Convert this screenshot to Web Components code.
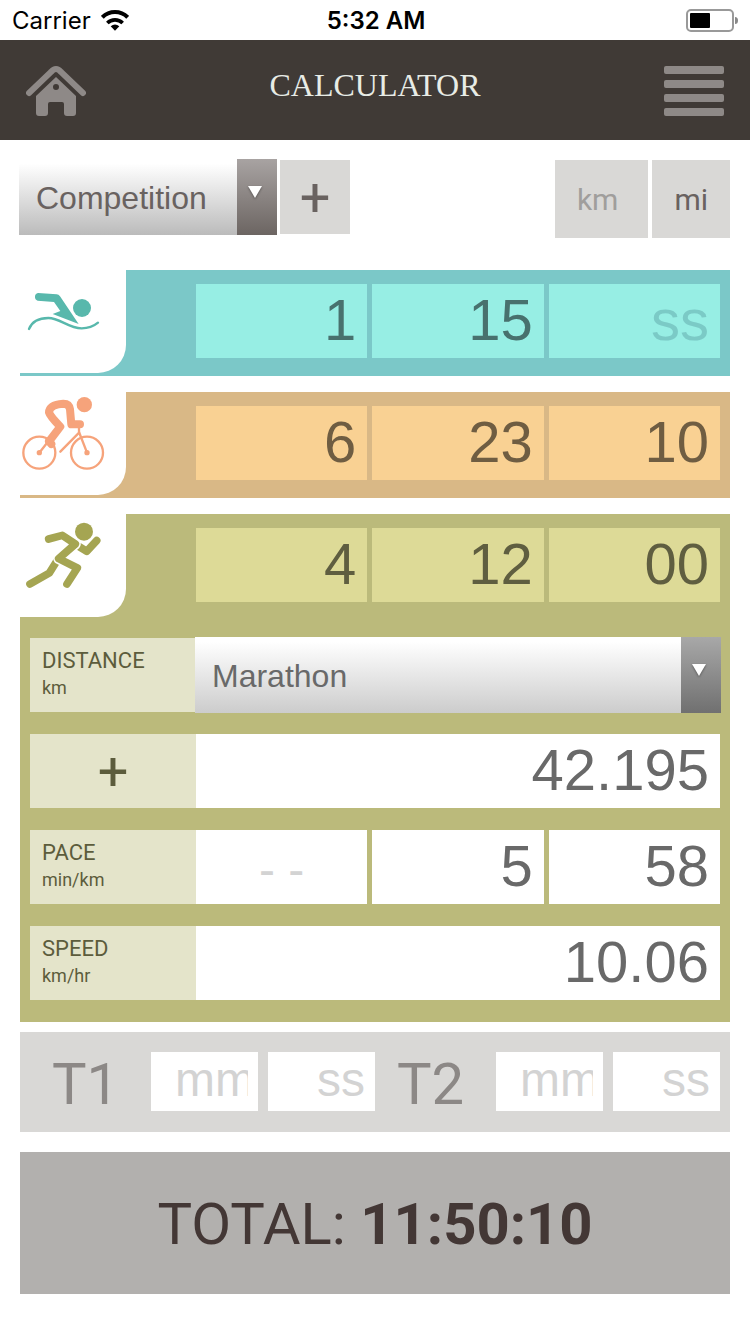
<!DOCTYPE html>
<html lang="en">
<head>
<meta charset="utf-8">
<meta name="viewport" content="width=device-width, initial-scale=1">
<title>Calculator</title>
<style>
    body {
        margin: 0;
        background: #fff;
        font-family: Roboto, sans-serif;
    }
</style>
</head>
<body>
<calc-app></calc-app>

<script>
// Box and input styles shared by every element that holds number fields
const fieldStyles = `
    *, *::before, *::after {
        box-sizing: border-box;
    }

    input {
        display: block;
        width: 100%;
        min-width: 0;
        height: 74px;
        margin: 0;
        padding: 0 11px 4px;
        border: 0;
        border-radius: 0;
        outline-offset: -2px;
        background: var(--field-bg, #fff);
        color: var(--field-fg, #696969);
        font: 58px "Liberation Sans", Arial, sans-serif;
        text-align: right;
    }

    input::placeholder {
        color: var(--field-hint, #d3d3d3);
        opacity: 1;
    }
`;

const icons = {
    swim: `
        <svg viewBox="60 30 318 309" fill="#58b8ac" aria-hidden="true">
            <path d="M114 99L170 103Q176 103 180 109L236 192L158 162L181 153L162 126L113 122A12 12 0 0 1 114 99Z"/>
            <circle cx="246" cy="144" r="27"/>
            <path d="M87 207C97 182 122 174 145 174C180 174 205 205 245 205C265 205 282 198 294 188" fill="none" stroke="#58b8ac" stroke-width="7" stroke-linecap="round"/>
        </svg>`,
    bike: `
        <svg viewBox="60 36 318 309" fill="none" stroke="#f6a37b" stroke-linecap="round" stroke-linejoin="round" aria-hidden="true">
            <g stroke-width="7">
                <circle cx="118" cy="218" r="48"/>
                <circle cx="261" cy="218" r="48"/>
                <path d="M145 184L118 218M181 215L238 157M237 140V156L261 218"/>
            </g>
            <path d="M240 133H214L210 88Q208 71 190 71Q148 74 147 97Q150 108 181 140L148 183" stroke-width="24"/>
            <path d="M147 184L154 192" stroke-width="24"/>
            <g fill="#f6a37b" stroke="none">
                <circle cx="118" cy="218" r="8"/>
                <circle cx="261" cy="218" r="8"/>
                <circle cx="253" cy="74" r="23"/>
            </g>
        </svg>`,
    run: `
        <svg viewBox="60 42 318 309" fill="none" stroke="#a5a552" stroke-width="23" stroke-linecap="round" stroke-linejoin="round" aria-hidden="true">
            <path d="M90 252L148 219L170 184"/>
            <path d="M290 122L260 154L238 140"/>
            <path d="M146 117L187 106L226 132L176 176L232 204L201 252" stroke="#fff" stroke-width="33"/>
            <path d="M146 117L187 106L226 132L176 176L232 204L201 252"/>
            <circle cx="252" cy="95" r="27" fill="#a5a552" stroke="none"/>
        </svg>`
};

class StatusBar extends HTMLElement {
    constructor() {
        super();
        this.attachShadow({ mode: 'open' });
    }

    connectedCallback() {
        this.shadowRoot.innerHTML = `
            <style>
                :host {
                    display: grid;
                    grid-template-columns: 1fr auto 1fr;
                    align-items: center;
                    height: 40px;
                    padding: 0 10px 0 12px;
                    color: #000;
                    font: 24px Inter, sans-serif;
                }

                .network {
                    display: flex;
                    align-items: center;
                    gap: 10px;
                }

                .time {
                    font-weight: 600;
                }

                .battery {
                    justify-self: end;
                }

                svg {
                    display: block;
                }
            </style>
            <span class="network">
                Carrier
                <svg width="28" height="21" viewBox="303 29 84 63" fill="none" stroke="#000" stroke-width="12" aria-hidden="true">
                    <path d="M307 51A54 54 0 0 1 383 51"/>
                    <path d="M322 68A33 33 0 0 1 368 68" stroke-width="11"/>
                    <path d="M345 91L332 78Q345 67 358 78Z" fill="#000" stroke="none"/>
                </svg>
            </span>
            <span class="time">5:32 AM</span>
            <svg class="battery" width="54" height="24" viewBox="0 0 54 24" aria-hidden="true">
                <rect x="1" y="2" width="46" height="21" rx="4" fill="none" stroke="#999" stroke-width="2"/>
                <rect x="4" y="5" width="20" height="15" rx="1"/>
                <path d="M49 9Q52 9 52 12.500Q52 16 49 16Z" fill="#888"/>
            </svg>
        `;
    }
}

class AppHeader extends HTMLElement {
    constructor() {
        super();
        this.attachShadow({ mode: 'open' });
    }

    connectedCallback() {
        this.shadowRoot.innerHTML = `
            <style>
                :host {
                    display: flex;
                    justify-content: space-between;
                    align-items: center;
                    height: 100px;
                    padding: 0 26px;
                    background: #403a36;
                }

                h1 {
                    margin: 0;
                    padding-bottom: 10px;
                    color: #e8ece6;
                    font: 32px "Liberation Serif", "Times New Roman", serif;
                }

                a, button {
                    display: block;
                    padding: 2px 0 0;
                    border: 0;
                    background: none;
                }

                svg {
                    display: block;
                    fill: #8e8987;
                }
            </style>
            <a href="#home" aria-label="Home">
                <svg width="60" height="50" viewBox="0 0 60 50" aria-hidden="true">
                    <path d="M3 27L25 6Q30 0 35 6L57 27" fill="none" stroke="#8e8987" stroke-width="6" stroke-linecap="round"/>
                    <path fill-rule="evenodd" d="M30 11L50 30V47Q50 50 47 50H41Q38 50 38 47V38Q38 36 36 36H24Q22 36 22 38V47Q22 50 19 50H13Q10 50 10 47V30ZM30 18A3 3 0 1 0 30 24A3 3 0 1 0 30 18Z"/>
                </svg>
            </a>
            <h1><slot></slot></h1>
            <button type="button" aria-label="Menu">
                <svg width="60" height="50" viewBox="0 0 60 50" aria-hidden="true">
                    <rect width="60" height="8" rx="2"/>
                    <rect y="14" width="60" height="8" rx="2"/>
                    <rect y="28" width="60" height="8" rx="2"/>
                    <rect y="42" width="60" height="8" rx="2"/>
                </svg>
            </button>
        `;
    }
}

class PickList extends HTMLElement {
    constructor() {
        super();
        this.attachShadow({ mode: 'open' });
    }

    connectedCallback() {
        const options = this.getAttribute('options').split(',');

        this.shadowRoot.innerHTML = `
            <style>
                :host {
                    display: block;
                    position: relative;
                    margin: -1px;
                }

                :host::after {
                    content: "";
                    position: absolute;
                    top: 27px;
                    right: 15px;
                    border: 7px solid transparent;
                    border-top: 12px solid #fff;
                    border-bottom: 0;
                    filter: drop-shadow(0 1px 1px rgba(0, 0, 0, 0.4));
                    pointer-events: none;
                }

                select {
                    appearance: none;
                    display: block;
                    width: 100%;
                    height: 76px;
                    margin: 0;
                    padding: 2px 56px 0 17px;
                    border: 0;
                    border-radius: 0;
                    background:
                        linear-gradient(var(--knob-top, #a8a8a8), var(--knob-bottom, #707070)) right / 40px 100% no-repeat,
                        linear-gradient(#fff 6%, var(--face-bottom, #ccc));
                    color: var(--pick-fg, #696969);
                    font: 32px "Liberation Sans", Arial, sans-serif;
                }
            </style>
            <select aria-label="${this.getAttribute('label')}">
                ${options.map(o => `<option>${o}</option>`).join('')}
            </select>
        `;
    }
}

class CalcToolbar extends HTMLElement {
    constructor() {
        super();
        this.attachShadow({ mode: 'open' });
    }

    connectedCallback() {
        this.shadowRoot.innerHTML = `
            <style>
                :host {
                    display: flex;
                    justify-content: space-between;
                    align-items: flex-start;
                }

                div {
                    display: flex;
                    gap: 4px;
                }

                pick-list {
                    width: 258px;
                    --face-bottom: #bbb;
                    --knob-top: #a8a3a2;
                    --knob-bottom: #6c6562;
                    --pick-fg: #696260;
                }

                button {
                    height: 78px;
                    padding: 0 22px;
                    border: 0;
                    background: #d9d8d6;
                    color: #696260;
                    font: 30px Roboto, sans-serif;
                }

                .add {
                    width: 70px;
                    height: 74px;
                    padding: 0;
                    font-size: 54px;
                }

                .km {
                    padding-right: 30px;
                    color: #a09e9c;
                }
            </style>
            <div>
                <pick-list label="Competition" options="Competition,Ironman,Half Ironman,Olympic,Sprint"></pick-list>
                <button type="button" class="add" aria-label="Add competition">+</button>
            </div>
            <div>
                <button type="button" class="km" aria-pressed="true">km</button>
                <button type="button" aria-pressed="false">mi</button>
            </div>
        `;
    }
}

class SportLeg extends HTMLElement {
    constructor() {
        super();
        this.attachShadow({ mode: 'open' });
    }

    connectedCallback() {
        const sport = this.getAttribute('sport');
        const [hh, mm, ss] = this.getAttribute('time').split(':');

        this.shadowRoot.innerHTML = `
            <style>
                ${fieldStyles}

                :host {
                    display: block;
                    background: var(--leg-bg);
                }

                .head {
                    display: flex;
                    align-items: flex-start;
                    gap: 70px;
                    height: 106px;
                    padding-right: 10px;
                }

                .tab {
                    flex: none;
                    width: 106px;
                    height: 103px;
                    border-radius: 0 0 28px 0;
                    background: #fff;
                }

                .tab svg {
                    display: block;
                    width: 100%;
                }

                .time {
                    flex: 1;
                    display: grid;
                    grid-template-columns: repeat(3, 1fr);
                    gap: 5px;
                    padding-top: 14px;
                }
            </style>
            <div class="head">
                <div class="tab">${icons[sport]}</div>
                <div class="time">
                    <input inputmode="numeric" placeholder="hh" value="${hh}" aria-label="${sport} hours">
                    <input inputmode="numeric" placeholder="mm" value="${mm}" aria-label="${sport} minutes">
                    <input inputmode="numeric" placeholder="ss" value="${ss}" aria-label="${sport} seconds">
                </div>
            </div>
            <slot></slot>
        `;
    }
}

class LegDetails extends HTMLElement {
    constructor() {
        super();
        this.attachShadow({ mode: 'open' });
    }

    connectedCallback() {
        this.shadowRoot.innerHTML = `
            <style>
                ${fieldStyles}

                :host {
                    display: grid;
                    gap: 22px;
                    padding: 18px 10px 22px;
                }

                .row {
                    display: grid;
                    grid-template-columns: 166px 1fr;
                    height: 74px;
                }

                label, .name, .add {
                    display: block;
                    padding: 9px 12px;
                    border: 0;
                    background: #e4e4ca;
                    color: #5c5c3c;
                    font: 22px/28px Roboto, sans-serif;
                }

                small {
                    display: block;
                    font-size: 18px;
                    line-height: 26px;
                }

                .add {
                    padding: 2px 0 0;
                    font-size: 54px;
                }

                .pace {
                    display: grid;
                    grid-template-columns: repeat(3, 1fr);
                    gap: 5px;
                }

                .empty::placeholder {
                    font-size: 48px;
                    text-align: center;
                }
            </style>
            <div class="row">
                <div class="name">DISTANCE<small>km</small></div>
                <pick-list label="Distance" options="Marathon,Half marathon,10 km,5 km"></pick-list>
            </div>
            <div class="row">
                <button type="button" class="add" aria-label="Add distance">+</button>
                <input inputmode="decimal" value="42.195" aria-label="Distance, km">
            </div>
            <div class="row">
                <label for="pace-min">PACE<small>min/km</small></label>
                <div class="pace">
                    <input class="empty" placeholder="- -" aria-label="Pace hours" readonly>
                    <input id="pace-min" inputmode="numeric" value="5">
                    <input inputmode="numeric" value="58" aria-label="Pace seconds">
                </div>
            </div>
            <div class="row">
                <label for="speed">SPEED<small>km/hr</small></label>
                <input id="speed" inputmode="decimal" value="10.06">
            </div>
        `;
    }
}

class TransitionBar extends HTMLElement {
    constructor() {
        super();
        this.attachShadow({ mode: 'open' });
    }

    group(name) {
        return `
            <div class="group">
                <label for="${name}-mm">${name}</label>
                <input id="${name}-mm" inputmode="numeric" placeholder="mm">
                <input inputmode="numeric" placeholder="ss" aria-label="${name} seconds">
            </div>
        `;
    }

    connectedCallback() {
        this.shadowRoot.innerHTML = `
            <style>
                ${fieldStyles}

                :host {
                    display: grid;
                    grid-template-columns: 1fr 1fr;
                    padding: 20px 10px;
                    background: #d9d8d6;
                }

                .group {
                    display: grid;
                    grid-template-columns: 111px 1fr 1fr;
                    gap: 10px;
                    height: 60px;
                }

                label {
                    color: #8c8886;
                    font-size: 58px;
                    line-height: 64px;
                    text-align: center;
                }

                input {
                    height: 59px;
                    padding: 0 10px 4px 24px;
                    font-size: 48px;
                }
            </style>
            ${this.group('T1')}
            ${this.group('T2')}
        `;
    }
}

class TotalBar extends HTMLElement {
    constructor() {
        super();
        this.attachShadow({ mode: 'open' });
    }

    connectedCallback() {
        this.shadowRoot.innerHTML = `
            <style>
                :host {
                    display: block;
                    padding-top: 2px;
                    background: #b2b0ae;
                    color: #433735;
                    font-size: 58px;
                    line-height: 140px;
                    text-align: center;
                }
            </style>
            TOTAL: <strong><slot></slot></strong>
        `;
    }
}

class CalcApp extends HTMLElement {
    constructor() {
        super();
        this.attachShadow({ mode: 'open' });
    }

    connectedCallback() {
        this.shadowRoot.innerHTML = `
            <style>
                :host {
                    display: block;
                }

                main {
                    padding: 20px 20px 40px;
                }

                .legs {
                    display: grid;
                    gap: 16px;
                    padding: 32px 0 10px;
                }

                .swim {
                    --leg-bg: #7bc8c8;
                    --field-bg: #97eee4;
                    --field-fg: #48716e;
                    --field-hint: #7bcac6;
                }

                .bike {
                    --leg-bg: #d9b886;
                    --field-bg: #f9d193;
                    --field-fg: #6f5d42;
                }

                .run {
                    --leg-bg: #bbba7b;
                    --field-bg: #ddda97;
                    --field-fg: #5f5e40;
                }

                leg-details {
                    --field-bg: #fff;
                    --field-fg: #696969;
                }

                total-bar {
                    margin-top: 20px;
                }
            </style>
            <status-bar></status-bar>
            <app-header>CALCULATOR</app-header>
            <main>
                <calc-toolbar></calc-toolbar>
                <div class="legs">
                    <sport-leg class="swim" sport="swim" time="1:15:"></sport-leg>
                    <sport-leg class="bike" sport="bike" time="6:23:10"></sport-leg>
                    <sport-leg class="run" sport="run" time="4:12:00">
                        <leg-details></leg-details>
                    </sport-leg>
                </div>
                <transition-bar></transition-bar>
                <total-bar>11:50:10</total-bar>
            </main>
        `;
    }
}

customElements.define('status-bar', StatusBar);
customElements.define('app-header', AppHeader);
customElements.define('pick-list', PickList);
customElements.define('calc-toolbar', CalcToolbar);
customElements.define('sport-leg', SportLeg);
customElements.define('leg-details', LegDetails);
customElements.define('transition-bar', TransitionBar);
customElements.define('total-bar', TotalBar);
customElements.define('calc-app', CalcApp);
</script>
</body>
</html>
